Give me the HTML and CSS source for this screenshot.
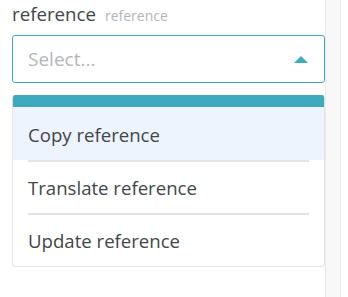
FILE: index.html
```html
<!DOCTYPE html>
<html lang="en">
<head>
  <meta charset="UTF-8">
  <title>Select</title>
  <link rel="stylesheet" href="styles.css">
</head>
<body>
  <div class="layout">
    <div class="panel">
      <div class="field-label">
        <span class="label-main">reference</span>
        <span class="label-hint">reference</span>
      </div>
      <div class="select">
        <span class="placeholder">Select...</span>
        <span class="caret"></span>
      </div>
      <div class="menu">
        <div class="menu-head"></div>
        <div class="menu-item active">Copy reference</div>
        <div class="menu-item">Translate reference</div>
        <div class="menu-item">Update reference</div>
      </div>
    </div>
    <div class="rail"></div>
  </div>
</body>
</html>
```
FILE: styles.css
```css
/* Цвета */
:root {
  --accent: #3fa9bd;
  --text: #41464a;
  --muted: #b3b6b8;
  --line: #e2e3e4;
  --hover: #edf4fe;
}
body { margin:0; padding:0; background:#fff; font-family:'Open Sans', 'Liberation Sans', sans-serif; color:var(--text); }

.layout { display:flex; height:297px; }
.panel { width:313px; padding:1px 0 0 12px; }
.rail { width:14px; background:#f8f8f8; border-left:1px solid #ebebeb; border-right:1px solid #ebebeb; }

.field-label { display:flex; align-items:baseline; gap:9px; height:34px; }
.label-main { font-size:18.7px; }
.label-hint { font-size:14px; color:var(--muted); }

.select { display:flex; align-items:center; justify-content:space-between; height:46px; border:1px solid var(--accent); border-radius:3px; padding:0 16px 0 15px; }
.placeholder { font-size:19px; color:var(--muted); }
.caret { width:0; height:0; border-left:7px solid transparent; border-right:7px solid transparent; border-bottom:7px solid var(--accent); }

.menu { margin-top:12px; border:1px solid var(--line); border-top:none; border-radius:3px; overflow:hidden; }
.menu-head { height:12px; background:var(--accent); }
.menu-item { position:relative; display:flex; align-items:center; height:51px; padding-left:15px; font-size:18.6px; border-top:2px solid transparent; }
.menu-item:first-of-type { border-top:none; }
.menu-item + .menu-item::before { content:""; position:absolute; left:15px; right:15px; top:-2px; height:2px; background:var(--line); }
.menu-item.active { background:var(--hover); }
```
